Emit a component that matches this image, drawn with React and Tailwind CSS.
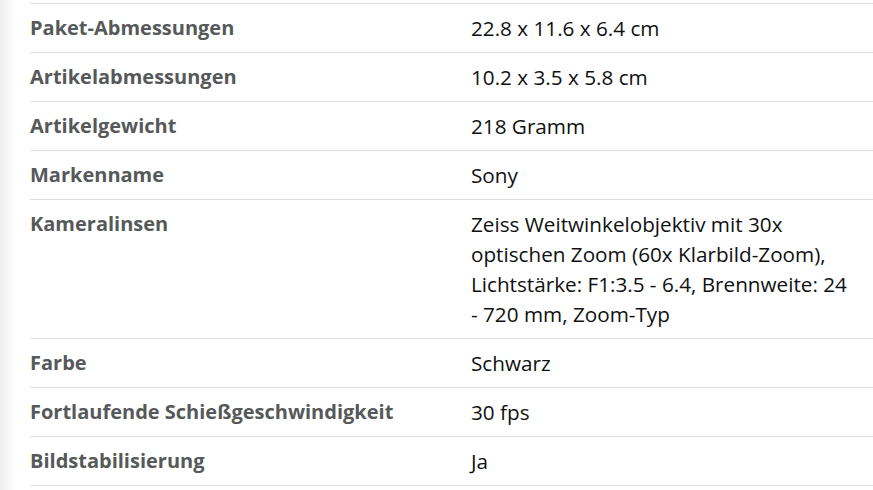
const rows = [
  { label: "Paket-Abmessungen", value: "22.8 x 11.6 x 6.4 cm" },
  { label: "Artikelabmessungen", value: "10.2 x 3.5 x 5.8 cm" },
  { label: "Artikelgewicht", value: "218 Gramm" },
  { label: "Markenname", value: "Sony" },
  {
    label: "Kameralinsen",
    value:
      "Zeiss Weitwinkelobjektiv mit 30x optischen Zoom (60x Klarbild-Zoom), Lichtstärke: F1:3.5 - 6.4, Brennweite: 24 - 720 mm, Zoom-Typ",
  },
  { label: "Farbe", value: "Schwarz" },
  { label: "Fortlaufende Schießgeschwindigkeit", value: "30 fps" },
  { label: "Bildstabilisierung", value: "Ja" },
];

export default function App() {
  return (
    <div className="flex h-[490px] w-[873px] overflow-hidden bg-white font-['Open_Sans',sans-serif] text-[20px] leading-[30px]">
      <div className="w-[16px] shrink-0 bg-gradient-to-r from-[#ededed] to-white" />
      <div className="flex-1 pl-[14px] pt-[3px]">
        {rows.map((row) => (
          <div
            key={row.label}
            className="flex border-t border-b-0 border-[#dddddd] py-[9px] last:border-b"
          >
            <div className="w-[441px] shrink-0 font-bold text-[#565959]">
              {row.label}
            </div>
            <div className="w-[380px] text-[20.7px] text-[#0f1111]">
              {row.value}
            </div>
          </div>
        ))}
      </div>
    </div>
  );
}
